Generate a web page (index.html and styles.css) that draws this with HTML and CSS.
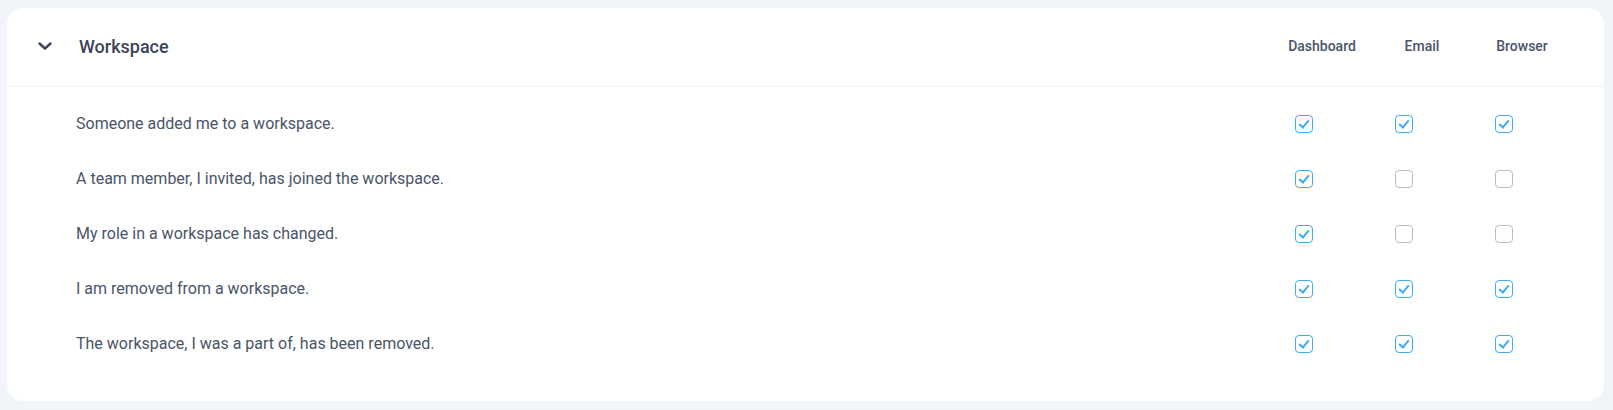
FILE: index.html
```html
<!DOCTYPE html>
<html lang="en">
<head>
<meta charset="utf-8">
<title>Workspace notifications</title>
<link rel="stylesheet" href="styles.css">
</head>
<body>
<div class="page">
  <section class="card">
    <header class="card-head">
      <button class="toggle" aria-label="Collapse">
        <svg width="14" height="8" viewBox="0 0 14 8"><path d="M1.5 1.5 L7 6.5 L12.5 1.5" fill="none" stroke="#3a4558" stroke-width="2.4" stroke-linecap="round" stroke-linejoin="round"/></svg>
      </button>
      <h2 class="title">Workspace</h2>
      <span class="col-label">Dashboard</span>
      <span class="col-label">Email</span>
      <span class="col-label">Browser</span>
    </header>
    <div class="rows">
      <div class="row">
        <span class="label">Someone added me to a workspace.</span>
        <span class="cell"><span class="cb on"></span></span>
        <span class="cell"><span class="cb on"></span></span>
        <span class="cell"><span class="cb on"></span></span>
      </div>
      <div class="row">
        <span class="label">A team member, I invited, has joined the workspace.</span>
        <span class="cell"><span class="cb on"></span></span>
        <span class="cell"><span class="cb"></span></span>
        <span class="cell"><span class="cb"></span></span>
      </div>
      <div class="row">
        <span class="label">My role in a workspace has changed.</span>
        <span class="cell"><span class="cb on"></span></span>
        <span class="cell"><span class="cb"></span></span>
        <span class="cell"><span class="cb"></span></span>
      </div>
      <div class="row">
        <span class="label">I am removed from a workspace.</span>
        <span class="cell"><span class="cb on"></span></span>
        <span class="cell"><span class="cb on"></span></span>
        <span class="cell"><span class="cb on"></span></span>
      </div>
      <div class="row">
        <span class="label">The workspace, I was a part of, has been removed.</span>
        <span class="cell"><span class="cb on"></span></span>
        <span class="cell"><span class="cb on"></span></span>
        <span class="cell"><span class="cb on"></span></span>
      </div>
    </div>
  </section>
</div>
</body>
</html>
```
FILE: styles.css
```css
html, body {
  margin: 0;
  padding: 0;
  background: #f1f5f9;
}
body {
  font-family: Roboto, "Liberation Sans", sans-serif;
  color: #4a5568;
}
.page {
  padding: 8px 9px 9px 7px;
}
.card {
  background: #ffffff;
  border-radius: 16px;
  height: 393px;
  box-sizing: border-box;
}
.card-head {
  display: grid;
  grid-template-columns: 72px 1fr 100px 100px 100px;
  align-items: center;
  height: 79px;
  padding-right: 32px;
  border-bottom: 1px solid #f0f2f5;
  box-sizing: border-box;
}
.toggle {
  border: 0;
  background: none;
  padding: 0;
  margin-left: 31px;
  width: 14px;
  height: 8px;
  display: flex;
  margin-top: -2px;
}
.title {
  margin: 0;
  margin-top: -2px;
  font-size: 18px;
  font-weight: 500;
  color: #3a4558;
}
.col-label {
  text-align: center;
  font-size: 14px;
  font-weight: 500;
  color: #4a5568;
  margin-top: -3px;
}
.rows {
  padding-top: 10px;
}
.row {
  display: grid;
  grid-template-columns: 1fr 100px 100px 100px;
  align-items: center;
  height: 55px;
  padding-left: 69px;
  padding-right: 32px;
}
.label {
  font-size: 16px;
  color: #4a5568;
  margin-top: -3px;
}
.cell {
  display: flex;
  padding-left: 23px;
}
.cb {
  width: 18px;
  height: 18px;
  margin-top: -2px;
  box-sizing: border-box;
  border: 1.5px solid #b9bfc8;
  border-radius: 4px;
  position: relative;
}
.cb.on {
  border-color: #3eabf3;
}
.cb.on::after {
  content: "";
  position: absolute;
  left: 5px;
  top: 2px;
  width: 4px;
  height: 8px;
  border-right: 2.2px solid #3eabf3;
  border-bottom: 2.2px solid #3eabf3;
  transform: rotate(40deg);
}
```
